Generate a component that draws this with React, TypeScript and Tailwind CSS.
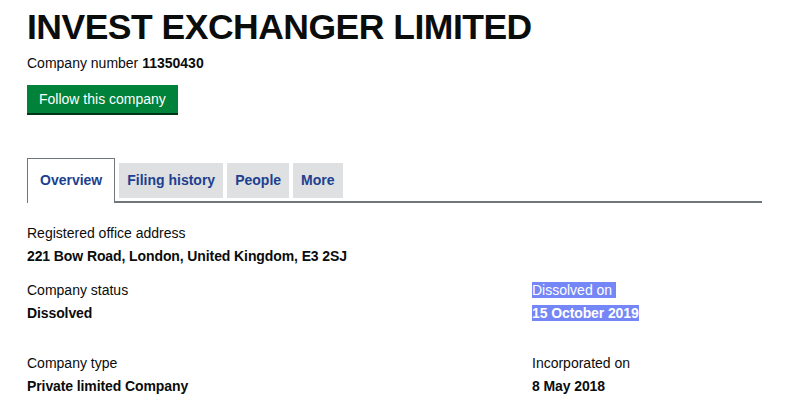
import React from 'react'

const tabs = ['Overview', 'Filing history', 'People', 'More']

const Field: React.FC<{ label: string; value: string; selected?: boolean }> = ({ label, value, selected }) => (
  <div>
    <div className="text-[14px] leading-[20px] text-[#0b0c0c]">
      {selected ? <span className="bg-[#7586f7] text-white">{label}&nbsp;</span> : label}
    </div>
    <div className="mt-[3px] text-[14px] leading-[20px] font-bold text-[#0b0c0c] tracking-[-0.1px]">
      {selected ? <span className="bg-[#7586f7] text-white">{value}</span> : value}
    </div>
  </div>
)

export default function App() {
  return (
    <div className="w-[800px] h-[414px] overflow-hidden bg-white font-['Liberation_Sans',Arial,sans-serif] text-[#0b0c0c]">
      <div className="pl-[27px] pr-[38px] pt-[7px]">
        <h1 className="text-[35.5px] leading-[40px] font-bold tracking-[-0.5px]">INVEST EXCHANGER LIMITED</h1>
        <p className="mt-[6px] text-[14px] leading-[20px]">
          Company number <strong className="font-bold">11350430</strong>
        </p>
        <button className="mt-[12px] h-[30px] px-[12px] bg-[#00823b] text-white text-[14px] leading-[28px] border-b-2 border-[#003618]">
          Follow this company
        </button>

        {/* tabs */}
        <div className="mt-[43px] flex items-end border-b-2 border-[#6f777b]">
          {tabs.map((t, i) =>
            i === 0 ? (
              <div key={t} className="-mb-[2px] h-[45px] px-[12px] flex items-center bg-white border border-b-0 border-[#6f777b] text-[14px] font-bold text-[#1d3f8f] pb-[1px]">
                {t}
              </div>
            ) : (
              <div key={t} className="ml-[4px] mb-[3px] h-[35px] px-[8px] flex items-center bg-[#dee0e2] text-[14px] font-bold text-[#1d3f8f]">
                {t}
              </div>
            )
          )}
        </div>

        <div className="mt-[20px]">
          <Field label="Registered office address" value="221 Bow Road, London, United Kingdom, E3 2SJ" />
        </div>
        <div className="mt-[14px] grid grid-cols-[505px_1fr] gap-y-[30px]">
          <Field label="Company status" value="Dissolved" />
          <Field label="Dissolved on" value="15 October 2019" selected />
          <Field label="Company type" value="Private limited Company" />
          <Field label="Incorporated on" value="8 May 2018" />
        </div>
      </div>
    </div>
  )
}
